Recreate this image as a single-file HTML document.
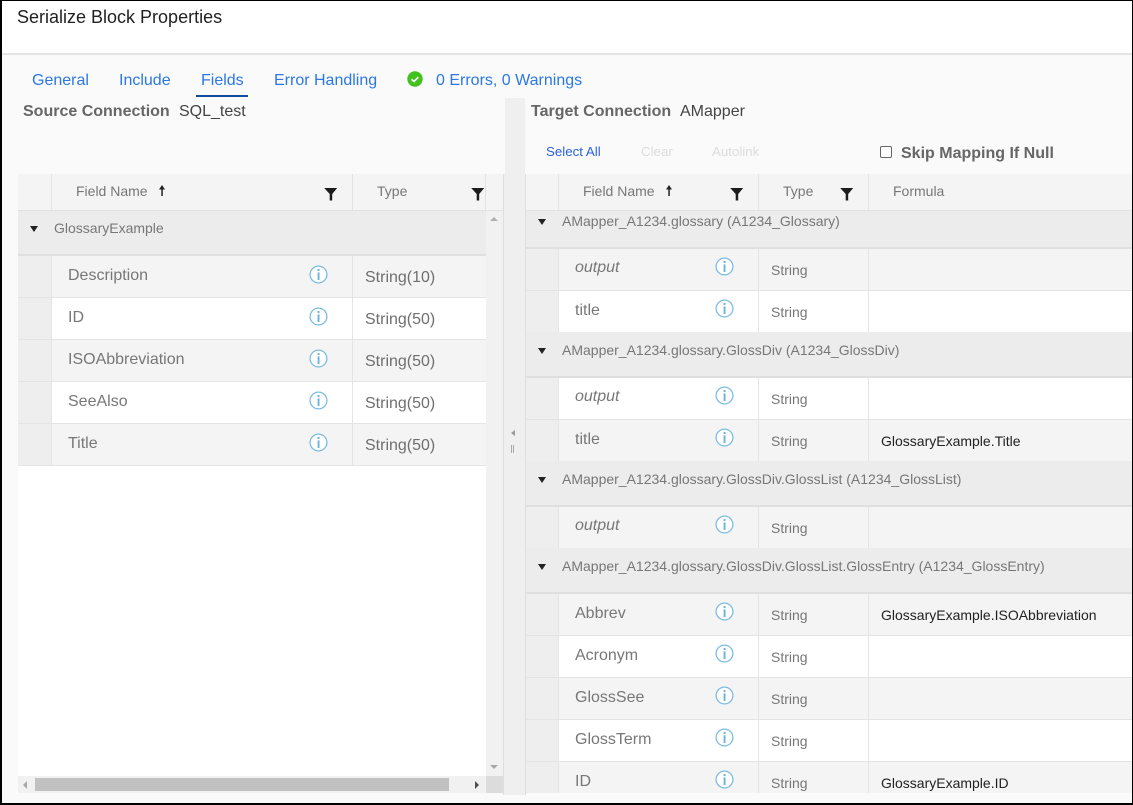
<!DOCTYPE html>
<html><head><meta charset="utf-8"><style>
html,body{margin:0;padding:0;background:#fff}
#p{position:relative;width:1133px;height:805px;overflow:hidden;background:#fafafa;font-family:"Liberation Sans",sans-serif}
#p div,#p svg{position:absolute}
.t{white-space:nowrap;line-height:20px;height:20px}
.l{color:#2b78e4;font-size:16px}
.h{color:#777;font-size:14px}
.f{color:#777;font-size:16px}
.s{color:#6f6f6f;font-size:16px}
.s2{color:#777;font-size:14px}
.g{color:#777;font-size:14px}
.v{color:#222;font-size:14px}
.tri{width:0;height:0;border-left:4px solid transparent;border-right:4px solid transparent;border-top:6px solid #222}
</style></head><body><div id="p">
<svg width="0" height="0" style="position:absolute"><defs>
<symbol id="i" viewBox="0 0 19 19"><circle cx="9.5" cy="9.5" r="8.4" fill="#fff" stroke="#7dbde2" stroke-width="1.3"/><rect x="8.6" y="4" width="1.9" height="2" fill="#6cb2dc"/><rect x="8.6" y="7.4" width="1.9" height="7.6" fill="#6cb2dc"/></symbol>
<symbol id="fl" viewBox="0 0 14 14"><path d="M0 1h13L8 7v6.500H5.500V7z" fill="#1c1c1c" transform="translate(.2 0)"/></symbol>
<symbol id="up" viewBox="0 0 8 11"><path d="M4 0L7 4.500H4.800V11H3.300V4.500H1z" fill="#222"/></symbol>
</defs></svg>

<!-- title area -->
<div style="left:0;top:0;width:1133px;height:53px;background:#fff"></div>
<div style="left:0;top:53px;width:1133px;height:2px;background:#e4e4e4"></div>
<div class="t" style="left:17px;top:7px;font-size:18px;color:#222">Serialize Block Properties</div>

<!-- tabs -->
<div class="t l" style="left:32px;top:71px">General</div>
<div class="t l" style="left:119px;top:71px">Include</div>
<div class="t l" style="left:201px;top:71px">Fields</div>
<div style="left:196px;top:95px;width:52px;height:2px;background:#0f4c9e"></div>
<div class="t l" style="left:274px;top:71px">Error Handling</div>
<svg style="left:407px;top:71px" width="16" height="16" viewBox="0 0 16 16"><circle cx="8" cy="8" r="7.700" fill="#43c11f"/><path d="M4.500 8.200l2.500 2.300 4.300-4.300" fill="none" stroke="#fff" stroke-width="1.700"/></svg>
<div class="t l" style="left:436px;top:71px">0 Errors, 0 Warnings</div>

<div class="t" style="left:23px;top:102px;font-size:16px;font-weight:bold;color:#666">Source Connection</div>
<div class="t" style="left:179px;top:102px;font-size:16px;color:#444">SQL_test</div>
<div class="t" style="left:531px;top:102px;font-size:16px;font-weight:bold;color:#666">Target Connection</div>
<div class="t" style="left:680px;top:102px;font-size:16px;color:#444">AMapper</div>

<div class="t" style="left:546px;top:142px;font-size:13.300px;color:#2a62e0">Select All</div>
<div class="t" style="left:641px;top:142px;font-size:13.300px;color:#dcdcdc">Clear</div>
<div class="t" style="left:712px;top:142px;font-size:13.300px;color:#dcdcdc">Autolink</div>
<div style="left:880px;top:146px;width:10px;height:10px;border:1px solid #666;border-radius:2px;background:#fff"></div>
<div class="t" style="left:901px;top:144px;font-size:16px;font-weight:bold;color:#666">Skip Mapping If Null</div>

<!-- splitter -->
<div style="left:505px;top:98px;width:20px;height:697px;background:#efefef"></div>
<div style="left:503px;top:174px;width:22px;height:621px;background:#efefef"></div>
<div style="left:503px;top:174px;width:1px;height:621px;background:#dedede"></div>
<div style="left:525px;top:174px;width:1px;height:621px;background:#dedede"></div>
<div style="left:511px;top:430px;width:0;height:0;border-top:3px solid transparent;border-bottom:3px solid transparent;border-right:4px solid #999"></div>
<div style="left:511px;top:445px;width:1px;height:8px;background:#aaa"></div>
<div style="left:513px;top:445px;width:1px;height:8px;background:#aaa"></div>

<!-- LEFT GRID -->
<div style="left:18px;top:174px;width:485px;height:618px;background:#fff"></div>
<div style="left:18px;top:174px;width:485px;height:36px;background:#f4f4f4"></div>
<div style="left:18px;top:210px;width:485px;height:1px;background:#e2e2e2"></div>
<div style="left:51px;top:174px;width:1px;height:36px;background:#e2e2e2"></div>
<div style="left:352px;top:174px;width:1px;height:36px;background:#e2e2e2"></div>
<div style="left:485px;top:174px;width:1px;height:36px;background:#e2e2e2"></div>
<div class="t h" style="left:76px;top:181px">Field Name</div>
<svg style="left:158px;top:185px" width="8" height="11"><use href="#up"/></svg>
<svg style="left:324px;top:187px" width="14" height="14"><use href="#fl"/></svg>
<div class="t h" style="left:377px;top:181px">Type</div>
<svg style="left:471px;top:187px" width="14" height="14"><use href="#fl"/></svg>

<div style="left:18px;top:211px;width:468px;height:43px;background:#ececec"></div>
<div style="left:18px;top:254px;width:468px;height:2px;background:#dfdfdf"></div>
<div class="tri" style="left:30px;top:226px"></div>
<div class="t g" style="left:54px;top:218px">GlossaryExample</div>

<div style="left:18px;top:256px;width:468px;height:41px;background:#f4f4f4"></div>
<div style="left:18px;top:340px;width:468px;height:41px;background:#f4f4f4"></div>
<div style="left:18px;top:424px;width:468px;height:41px;background:#f4f4f4"></div>
<div style="left:18px;top:256px;width:33px;height:209px;background:#eee"></div>
<div style="left:18px;top:297px;width:468px;height:1px;background:#e4e4e4"></div>
<div style="left:18px;top:339px;width:468px;height:1px;background:#e4e4e4"></div>
<div style="left:18px;top:381px;width:468px;height:1px;background:#e4e4e4"></div>
<div style="left:18px;top:423px;width:468px;height:1px;background:#e4e4e4"></div>
<div style="left:18px;top:465px;width:468px;height:1px;background:#e4e4e4"></div>
<div style="left:51px;top:256px;width:1px;height:209px;background:#e4e4e4"></div>
<div style="left:352px;top:256px;width:1px;height:209px;background:#e4e4e4"></div>
<div class="t f" style="left:68px;top:266px">Description</div><svg style="left:309px;top:265px" width="19" height="19"><use href="#i"/></svg><div class="t s" style="left:365px;top:268px">String(10)</div>
<div class="t f" style="left:68px;top:308px">ID</div><svg style="left:309px;top:307px" width="19" height="19"><use href="#i"/></svg><div class="t s" style="left:365px;top:310px">String(50)</div>
<div class="t f" style="left:68px;top:350px">ISOAbbreviation</div><svg style="left:309px;top:349px" width="19" height="19"><use href="#i"/></svg><div class="t s" style="left:365px;top:352px">String(50)</div>
<div class="t f" style="left:68px;top:392px">SeeAlso</div><svg style="left:309px;top:391px" width="19" height="19"><use href="#i"/></svg><div class="t s" style="left:365px;top:394px">String(50)</div>
<div class="t f" style="left:68px;top:434px">Title</div><svg style="left:309px;top:433px" width="19" height="19"><use href="#i"/></svg><div class="t s" style="left:365px;top:436px">String(50)</div>

<!-- left scrollbars -->
<div style="left:486px;top:211px;width:17px;height:565px;background:#f1f1f1"></div>
<div style="left:490px;top:217px;width:0;height:0;border-left:4px solid transparent;border-right:4px solid transparent;border-bottom:4px solid #b0b0b0"></div>
<div style="left:490px;top:765px;width:0;height:0;border-left:4px solid transparent;border-right:4px solid transparent;border-top:4px solid #a8a8a8"></div>
<div style="left:18px;top:776px;width:468px;height:17px;background:#f1f1f1"></div>
<div style="left:486px;top:776px;width:17px;height:17px;background:#dcdcdc"></div>
<div style="left:35px;top:778px;width:414px;height:13px;background:#c1c1c1"></div>
<div style="left:23px;top:781px;width:0;height:0;border-top:4px solid transparent;border-bottom:4px solid transparent;border-right:4px solid #a8a8a8"></div>
<div style="left:475px;top:781px;width:0;height:0;border-top:4px solid transparent;border-bottom:4px solid transparent;border-left:4px solid #505050"></div>

<!-- RIGHT GRID -->
<div style="left:526px;top:174px;width:607px;height:619px;background:#fff"></div>
<div style="left:526px;top:174px;width:607px;height:36px;background:#f4f4f4"></div>
<div style="left:526px;top:210px;width:607px;height:1px;background:#e2e2e2"></div>
<div style="left:558px;top:174px;width:1px;height:36px;background:#e2e2e2"></div>
<div style="left:758px;top:174px;width:1px;height:36px;background:#e2e2e2"></div>
<div style="left:868px;top:174px;width:1px;height:36px;background:#e2e2e2"></div>
<div class="t h" style="left:583px;top:181px">Field Name</div>
<svg style="left:665px;top:185px" width="8" height="11"><use href="#up"/></svg>
<svg style="left:730px;top:187px" width="14" height="14"><use href="#fl"/></svg>
<div class="t h" style="left:783px;top:181px">Type</div>
<svg style="left:840px;top:187px" width="14" height="14"><use href="#fl"/></svg>
<div class="t h" style="left:893px;top:181px">Formula</div>

<!-- row backgrounds -->
<div style="left:526px;top:249px;width:607px;height:41px;background:#f4f4f4"></div>
<div style="left:526px;top:420px;width:607px;height:41px;background:#f4f4f4"></div>
<div style="left:526px;top:507px;width:607px;height:41px;background:#f4f4f4"></div>
<div style="left:526px;top:594px;width:607px;height:41px;background:#f4f4f4"></div>
<div style="left:526px;top:678px;width:607px;height:41px;background:#f4f4f4"></div>
<div style="left:526px;top:762px;width:607px;height:31px;background:#f4f4f4"></div>
<!-- gutter -->
<div style="left:526px;top:249px;width:32px;height:84px;background:#eee"></div>
<div style="left:526px;top:378px;width:32px;height:83px;background:#eee"></div>
<div style="left:526px;top:507px;width:32px;height:41px;background:#eee"></div>
<div style="left:526px;top:594px;width:32px;height:199px;background:#eee"></div>
<!-- column lines -->
<div style="left:558px;top:249px;width:1px;height:544px;background:#e4e4e4"></div>
<div style="left:758px;top:249px;width:1px;height:544px;background:#e4e4e4"></div>
<div style="left:868px;top:249px;width:1px;height:544px;background:#e4e4e4"></div>
<!-- row lines -->
<div style="left:526px;top:290px;width:607px;height:1px;background:#e4e4e4"></div>
<div style="left:526px;top:419px;width:607px;height:1px;background:#e4e4e4"></div>
<div style="left:526px;top:635px;width:607px;height:1px;background:#e4e4e4"></div>
<div style="left:526px;top:677px;width:607px;height:1px;background:#e4e4e4"></div>
<div style="left:526px;top:719px;width:607px;height:1px;background:#e4e4e4"></div>
<div style="left:526px;top:761px;width:607px;height:1px;background:#e4e4e4"></div>
<!-- groups -->
<div style="left:526px;top:211px;width:607px;height:36px;background:#ececec"></div>
<div style="left:526px;top:247px;width:607px;height:2px;background:#dfdfdf"></div>
<div style="left:526px;top:332px;width:607px;height:44px;background:#ececec"></div>
<div style="left:526px;top:376px;width:607px;height:2px;background:#dfdfdf"></div>
<div style="left:526px;top:461px;width:607px;height:44px;background:#ececec"></div>
<div style="left:526px;top:505px;width:607px;height:2px;background:#dfdfdf"></div>
<div style="left:526px;top:548px;width:607px;height:44px;background:#ececec"></div>
<div style="left:526px;top:592px;width:607px;height:2px;background:#dfdfdf"></div>
<div class="tri" style="left:538px;top:219px"></div><div class="t g" style="left:562px;top:211px">AMapper_A1234.glossary (A1234_Glossary)</div>
<div class="tri" style="left:538px;top:348px"></div><div class="t g" style="left:562px;top:340px">AMapper_A1234.glossary.GlossDiv (A1234_GlossDiv)</div>
<div class="tri" style="left:538px;top:477px"></div><div class="t g" style="left:562px;top:469px">AMapper_A1234.glossary.GlossDiv.GlossList (A1234_GlossList)</div>
<div class="tri" style="left:538px;top:564px"></div><div class="t g" style="left:562px;top:556px">AMapper_A1234.glossary.GlossDiv.GlossList.GlossEntry (A1234_GlossEntry)</div>

<!-- rows -->
<div class="t f" style="left:575px;top:258px;font-style:italic">output</div><svg style="left:715px;top:257px" width="19" height="19"><use href="#i"/></svg><div class="t s2" style="left:771px;top:260px">String</div>
<div class="t f" style="left:575px;top:301px">title</div><svg style="left:715px;top:299px" width="19" height="19"><use href="#i"/></svg><div class="t s2" style="left:771px;top:302px">String</div>
<div class="t f" style="left:575px;top:387px;font-style:italic">output</div><svg style="left:715px;top:386px" width="19" height="19"><use href="#i"/></svg><div class="t s2" style="left:771px;top:389px">String</div>
<div class="t f" style="left:575px;top:430px">title</div><svg style="left:715px;top:428px" width="19" height="19"><use href="#i"/></svg><div class="t s2" style="left:771px;top:431px">String</div><div class="t v" style="left:881px;top:431px">GlossaryExample.Title</div>
<div class="t f" style="left:575px;top:516px;font-style:italic">output</div><svg style="left:715px;top:515px" width="19" height="19"><use href="#i"/></svg><div class="t s2" style="left:771px;top:518px">String</div>
<div class="t f" style="left:575px;top:604px">Abbrev</div><svg style="left:715px;top:602px" width="19" height="19"><use href="#i"/></svg><div class="t s2" style="left:771px;top:605px">String</div><div class="t v" style="left:881px;top:605px">GlossaryExample.ISOAbbreviation</div>
<div class="t f" style="left:575px;top:646px">Acronym</div><svg style="left:715px;top:644px" width="19" height="19"><use href="#i"/></svg><div class="t s2" style="left:771px;top:647px">String</div>
<div class="t f" style="left:575px;top:688px">GlossSee</div><svg style="left:715px;top:686px" width="19" height="19"><use href="#i"/></svg><div class="t s2" style="left:771px;top:689px">String</div>
<div class="t f" style="left:575px;top:730px">GlossTerm</div><svg style="left:715px;top:728px" width="19" height="19"><use href="#i"/></svg><div class="t s2" style="left:771px;top:731px">String</div>
<div class="t f" style="left:575px;top:772px">ID</div><svg style="left:715px;top:770px" width="19" height="19"><use href="#i"/></svg><div class="t s2" style="left:771px;top:773px">String</div><div class="t v" style="left:881px;top:773px">GlossaryExample.ID</div>

<!-- frame -->
<div style="left:0;top:0;width:1133px;height:1px;background:#000"></div>
<div style="left:0;top:0;width:2px;height:805px;background:#000"></div>
<div style="left:1132px;top:0;width:1px;height:805px;background:#000"></div>
<div style="left:0;top:803px;width:1133px;height:2px;background:#000"></div>
</div></body></html>
